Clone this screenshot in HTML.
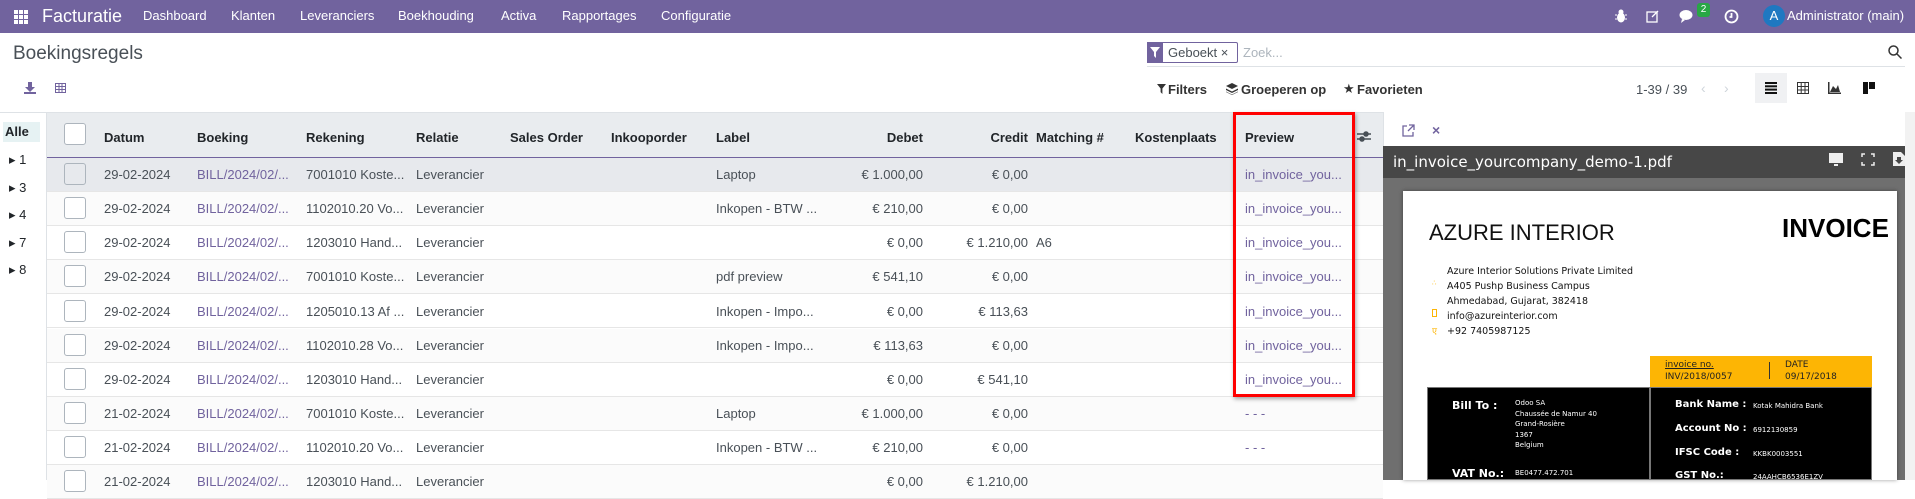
<!DOCTYPE html>
<html><head><meta charset="utf-8"><style>
*{box-sizing:border-box;margin:0;padding:0}
body{width:1915px;height:480px;overflow:hidden;background:#fff;font-family:"Liberation Sans",sans-serif;font-size:13px;color:#495057;position:relative}
.a{position:absolute;white-space:nowrap}
.nav{position:absolute;left:0;top:0;width:1915px;height:33px;background:#71639e;color:#fff}
.nav .a{top:8px;font-size:13px;color:#fff}
.hdr{position:absolute;left:47px;top:113px;width:1336px;height:45px;background:#e9ecef;border-bottom:1px solid #71639e}
.th{position:absolute;top:130px;font-weight:bold;color:#212529;font-size:13px}
.row{position:absolute;left:47px;width:1336px;height:34px;border-bottom:1px solid #e6e6e6;background:#fff}
.cb{position:absolute;left:64px;width:22px;height:22px;border:1px solid #adb5bd;border-radius:3px;background:#fff}
.c{position:absolute;font-size:13px;color:#495057}
.lk{color:#71639e}
.r{text-align:right}
.pdf{position:absolute;font-family:"DejaVu Sans",sans-serif;white-space:nowrap}
</style></head><body>
<div class="nav">
 <svg class="a" style="left:14px;top:10px" width="14" height="14" viewBox="0 0 14 14" fill="#fff"><rect x="0" y="0" width="4" height="4"/><rect x="5" y="0" width="4" height="4"/><rect x="10" y="0" width="4" height="4"/><rect x="0" y="5" width="4" height="4"/><rect x="5" y="5" width="4" height="4"/><rect x="10" y="5" width="4" height="4"/><rect x="0" y="10" width="4" height="4"/><rect x="5" y="10" width="4" height="4"/><rect x="10" y="10" width="4" height="4"/></svg>
 <div class="a" style="left:42px;top:6px;font-size:18px">Facturatie</div>
 <div class="a" style="left:143px">Dashboard</div>
 <div class="a" style="left:231px">Klanten</div>
 <div class="a" style="left:300px">Leveranciers</div>
 <div class="a" style="left:398px">Boekhouding</div>
 <div class="a" style="left:501px">Activa</div>
 <div class="a" style="left:562px">Rapportages</div>
 <div class="a" style="left:661px">Configuratie</div>
 <svg class="a" style="left:1615px;top:9px" width="12" height="14" viewBox="0 0 12 14" fill="#fff"><ellipse cx="6" cy="8.5" rx="4" ry="5"/><circle cx="6" cy="3" r="2.5"/><path d="M0 6h2M10 6h2M0 10h2M10 10h2" stroke="#fff"/></svg>
 <svg class="a" style="left:1646px;top:9px" width="14" height="14" viewBox="0 0 14 14" fill="none" stroke="#fff" stroke-width="1.3"><rect x="1" y="3" width="10" height="10"/><path d="M6 8l6-6"/></svg>
 <svg class="a" style="left:1679px;top:9px" width="16" height="15" viewBox="0 0 16 15" fill="#fff"><ellipse cx="7" cy="6" rx="6.5" ry="5"/><path d="M3 10l-1 4 4-3z"/></svg>
 <div class="a" style="left:1697px;top:3px;width:13px;height:14px;background:#28a745;border-radius:3px;font-size:10px;text-align:center;line-height:14px">2</div>
 <svg class="a" style="left:1724px;top:9px" width="15" height="15" viewBox="0 0 15 15" fill="none" stroke="#fff" stroke-width="1.8"><circle cx="7.5" cy="7.5" r="6"/><path d="M7.5 4v4h-2"/></svg>
 <div class="a" style="left:1763px;top:5px;width:22px;height:22px;border-radius:50%;background:#1f78c1;text-align:center;line-height:22px;font-size:13px;top:5px">A</div>
 <div class="a" style="left:1787px">Administrator (main)</div>
</div>
<div class="a" style="left:13px;top:43px;font-size:19px;color:#495057">Boekingsregels</div>
<svg class="a" style="left:24px;top:82px" width="12" height="12" viewBox="0 0 12 12" fill="#71639e"><path d="M4 0h4v5h3l-5 5-5-5h3z"/><rect x="0" y="10" width="12" height="2"/></svg>
<svg class="a" style="left:55px;top:83px" width="11" height="10" viewBox="0 0 11 10" fill="none" stroke="#71639e"><rect x=".5" y=".5" width="10" height="9"/><path d="M.5 3.5h10M.5 6.5h10M4 .5v9M7 .5v9"/></svg>
<!-- search -->
<div class="a" style="left:1147px;top:42px;width:91px;height:21px;border:1px solid #71639e;border-radius:2px"></div>
<div class="a" style="left:1147px;top:42px;width:16px;height:21px;background:#71639e"></div>
<svg class="a" style="left:1150px;top:47px" width="10" height="11" viewBox="0 0 10 11" fill="#fff"><path d="M0 0h10L6 5v6L4 9V5z"/></svg>
<div class="a" style="left:1168px;top:45px;color:#495057">Geboekt ×</div>
<div class="a" style="left:1243px;top:45px;color:#adb5bd">Zoek...</div>
<div class="a" style="left:1147px;top:66px;width:758px;height:1px;background:#dee2e6"></div>
<svg class="a" style="left:1888px;top:45px" width="14" height="14" viewBox="0 0 14 14" fill="none" stroke="#333" stroke-width="1.5"><circle cx="5.5" cy="5.5" r="4.5"/><path d="M9 9l4.5 4.5"/></svg>
<!-- toolbar -->
<svg class="a" style="left:1157px;top:84px" width="9" height="10" viewBox="0 0 10 11" fill="#333"><path d="M0 0h10L6 5v6L4 9V5z"/></svg>
<div class="a" style="left:1168px;top:82px;font-weight:bold;color:#333">Filters</div>
<svg class="a" style="left:1226px;top:83px" width="12" height="12" viewBox="0 0 12 12" fill="#333"><path d="M6 0l6 3-6 3-6-3z"/><path d="M0 5.5l6 3 6-3v1.5l-6 3-6-3zM0 8.5l6 3 6-3v.5l-6 3-6-3z"/></svg>
<div class="a" style="left:1241px;top:82px;font-weight:bold;color:#333">Groeperen op</div>
<div class="a" style="left:1343px;top:81px;color:#333;font-size:13px">★</div>
<div class="a" style="left:1357px;top:82px;font-weight:bold;color:#333">Favorieten</div>
<div class="a" style="left:1636px;top:82px;color:#495057">1-39 / 39</div>
<div class="a" style="left:1701px;top:80px;color:#ced4da;font-size:14px">‹</div>
<div class="a" style="left:1724px;top:80px;color:#ced4da;font-size:14px">›</div>
<div class="a" style="left:1755px;top:73px;width:32px;height:30px;background:#f0f1f3"></div>
<svg class="a" style="left:1765px;top:82px" width="12" height="12" viewBox="0 0 12 12" fill="#111"><rect y="0" width="12" height="2"/><rect y="3.3" width="12" height="2"/><rect y="6.6" width="12" height="2"/><rect y="10" width="12" height="2"/></svg>
<svg class="a" style="left:1797px;top:82px" width="12" height="12" viewBox="0 0 12 12" fill="none" stroke="#333"><rect x=".5" y=".5" width="11" height="11"/><path d="M.5 4.5h11M.5 8h11M4.2 .5v11M8 .5v11"/></svg>
<svg class="a" style="left:1828px;top:82px" width="13" height="12" viewBox="0 0 13 12" fill="#333"><path d="M0 0v12h13v-1.5H1.5V0z"/><path d="M2 10l3-6 3 3 2-4 2 7z"/></svg>
<svg class="a" style="left:1863px;top:82px" width="12" height="12" viewBox="0 0 12 12" fill="#111"><rect width="5" height="12"/><rect x="6" width="6" height="7"/></svg>
<!-- sidebar -->
<div class="a" style="left:46px;top:112px;width:1px;height:368px;background:#dee2e6"></div>
<div class="a" style="left:0;top:112px;width:1383px;height:1px;background:#dee2e6"></div>
<div class="a" style="left:3px;top:122px;width:37px;height:20px;background:#e6f2f3"></div>
<div class="a" style="left:5px;top:124px;font-weight:bold;color:#212529">Alle</div>
<div class="a" style="left:9px;top:152px;color:#212529">▸ 1</div>
<div class="a" style="left:9px;top:180px;color:#212529">▸ 3</div>
<div class="a" style="left:9px;top:207px;color:#212529">▸ 4</div>
<div class="a" style="left:9px;top:235px;color:#212529">▸ 7</div>
<div class="a" style="left:9px;top:262px;color:#212529">▸ 8</div>
<!-- table header -->
<div class="hdr"></div>
<div class="cb" style="top:123px"></div>
<div class="th" style="left:104px">Datum</div>
<div class="th" style="left:197px">Boeking</div>
<div class="th" style="left:306px">Rekening</div>
<div class="th" style="left:416px">Relatie</div>
<div class="th" style="left:510px">Sales Order</div>
<div class="th" style="left:611px">Inkooporder</div>
<div class="th" style="left:716px">Label</div>
<div class="th" style="left:863px;width:60px;text-align:right">Debet</div>
<div class="th" style="left:968px;width:60px;text-align:right">Credit</div>
<div class="th" style="left:1036px">Matching #</div>
<div class="th" style="left:1135px">Kostenplaats</div>
<div class="th" style="left:1245px">Preview</div>
<svg class="a" style="left:1357px;top:130px" width="14" height="13" viewBox="0 0 14 13" stroke="#495057" stroke-width="1.5" fill="#495057"><path d="M0 4h14M0 9h14"/><circle cx="9" cy="4" r="2"/><circle cx="5" cy="9" r="2"/></svg>
<!-- rows -->
<div class="row" style="top:158px;background:#e7e9ed"></div>
<div class="row" style="top:192px;background:#fbfbfb"></div>
<div class="row" style="top:226px"></div>
<div class="row" style="top:260px;background:#fbfbfb"></div>
<div class="row" style="top:294px"></div>
<div class="row" style="top:329px;background:#fbfbfb"></div>
<div class="row" style="top:363px"></div>
<div class="row" style="top:397px;background:#fbfbfb"></div>
<div class="row" style="top:431px"></div>
<div class="row" style="top:465px;background:#fbfbfb"></div>

<div class="cb" style="top:163px;background:#e7e9ed"></div><div class="c" style="left:104px;top:167px">29-02-2024</div><div class="c lk" style="left:197px;top:167px">BILL/2024/02/...</div><div class="c" style="left:306px;top:167px">7001010 Koste...</div><div class="c" style="left:416px;top:167px">Leverancier</div><div class="c" style="left:716px;top:167px">Laptop</div><div class="c r" style="left:823px;width:100px;top:167px">€ 1.000,00</div><div class="c r" style="left:928px;width:100px;top:167px">€ 0,00</div><div class="c lk" style="left:1245px;top:167px">in_invoice_you...</div>
<div class="cb" style="top:197px"></div><div class="c" style="left:104px;top:201px">29-02-2024</div><div class="c lk" style="left:197px;top:201px">BILL/2024/02/...</div><div class="c" style="left:306px;top:201px">1102010.20 Vo...</div><div class="c" style="left:416px;top:201px">Leverancier</div><div class="c" style="left:716px;top:201px">Inkopen - BTW ...</div><div class="c r" style="left:823px;width:100px;top:201px">€ 210,00</div><div class="c r" style="left:928px;width:100px;top:201px">€ 0,00</div><div class="c lk" style="left:1245px;top:201px">in_invoice_you...</div>
<div class="cb" style="top:231px"></div><div class="c" style="left:104px;top:235px">29-02-2024</div><div class="c lk" style="left:197px;top:235px">BILL/2024/02/...</div><div class="c" style="left:306px;top:235px">1203010 Hand...</div><div class="c" style="left:416px;top:235px">Leverancier</div><div class="c r" style="left:823px;width:100px;top:235px">€ 0,00</div><div class="c r" style="left:928px;width:100px;top:235px">€ 1.210,00</div><div class="c" style="left:1036px;top:235px">A6</div><div class="c lk" style="left:1245px;top:235px">in_invoice_you...</div>
<div class="cb" style="top:265px"></div><div class="c" style="left:104px;top:269px">29-02-2024</div><div class="c lk" style="left:197px;top:269px">BILL/2024/02/...</div><div class="c" style="left:306px;top:269px">7001010 Koste...</div><div class="c" style="left:416px;top:269px">Leverancier</div><div class="c" style="left:716px;top:269px">pdf preview</div><div class="c r" style="left:823px;width:100px;top:269px">€ 541,10</div><div class="c r" style="left:928px;width:100px;top:269px">€ 0,00</div><div class="c lk" style="left:1245px;top:269px">in_invoice_you...</div>
<div class="cb" style="top:300px"></div><div class="c" style="left:104px;top:304px">29-02-2024</div><div class="c lk" style="left:197px;top:304px">BILL/2024/02/...</div><div class="c" style="left:306px;top:304px">1205010.13 Af ...</div><div class="c" style="left:416px;top:304px">Leverancier</div><div class="c" style="left:716px;top:304px">Inkopen - Impo...</div><div class="c r" style="left:823px;width:100px;top:304px">€ 0,00</div><div class="c r" style="left:928px;width:100px;top:304px">€ 113,63</div><div class="c lk" style="left:1245px;top:304px">in_invoice_you...</div>
<div class="cb" style="top:334px"></div><div class="c" style="left:104px;top:338px">29-02-2024</div><div class="c lk" style="left:197px;top:338px">BILL/2024/02/...</div><div class="c" style="left:306px;top:338px">1102010.28 Vo...</div><div class="c" style="left:416px;top:338px">Leverancier</div><div class="c" style="left:716px;top:338px">Inkopen - Impo...</div><div class="c r" style="left:823px;width:100px;top:338px">€ 113,63</div><div class="c r" style="left:928px;width:100px;top:338px">€ 0,00</div><div class="c lk" style="left:1245px;top:338px">in_invoice_you...</div>
<div class="cb" style="top:368px"></div><div class="c" style="left:104px;top:372px">29-02-2024</div><div class="c lk" style="left:197px;top:372px">BILL/2024/02/...</div><div class="c" style="left:306px;top:372px">1203010 Hand...</div><div class="c" style="left:416px;top:372px">Leverancier</div><div class="c r" style="left:823px;width:100px;top:372px">€ 0,00</div><div class="c r" style="left:928px;width:100px;top:372px">€ 541,10</div><div class="c lk" style="left:1245px;top:372px">in_invoice_you...</div>
<div class="cb" style="top:402px"></div><div class="c" style="left:104px;top:406px">21-02-2024</div><div class="c lk" style="left:197px;top:406px">BILL/2024/02/...</div><div class="c" style="left:306px;top:406px">7001010 Koste...</div><div class="c" style="left:416px;top:406px">Leverancier</div><div class="c" style="left:716px;top:406px">Laptop</div><div class="c r" style="left:823px;width:100px;top:406px">€ 1.000,00</div><div class="c r" style="left:928px;width:100px;top:406px">€ 0,00</div><div class="c lk" style="left:1245px;top:406px">- - -</div>
<div class="cb" style="top:436px"></div><div class="c" style="left:104px;top:440px">21-02-2024</div><div class="c lk" style="left:197px;top:440px">BILL/2024/02/...</div><div class="c" style="left:306px;top:440px">1102010.20 Vo...</div><div class="c" style="left:416px;top:440px">Leverancier</div><div class="c" style="left:716px;top:440px">Inkopen - BTW ...</div><div class="c r" style="left:823px;width:100px;top:440px">€ 210,00</div><div class="c r" style="left:928px;width:100px;top:440px">€ 0,00</div><div class="c lk" style="left:1245px;top:440px">- - -</div>
<div class="cb" style="top:470px"></div><div class="c" style="left:104px;top:474px">21-02-2024</div><div class="c lk" style="left:197px;top:474px">BILL/2024/02/...</div><div class="c" style="left:306px;top:474px">1203010 Hand...</div><div class="c" style="left:416px;top:474px">Leverancier</div><div class="c r" style="left:823px;width:100px;top:474px">€ 0,00</div><div class="c r" style="left:928px;width:100px;top:474px">€ 1.210,00</div>
<!-- red box -->
<div class="a" style="left:1233px;top:112px;width:122px;height:285px;border:3px solid #f00;box-shadow:1px 2px 4px rgba(0,0,0,.35)"></div>
<!-- preview panel -->
<div class="a" style="left:1383px;top:112px;width:532px;height:368px;background:#fff;border-left:1px solid #dee2e6"></div>
<svg class="a" style="left:1402px;top:124px" width="13" height="13" viewBox="0 0 13 13" fill="none" stroke="#71639e" stroke-width="1.3"><path d="M5 2H1v10h10V8M7 1h5v5M12 1L6 7"/></svg>
<div class="a" style="left:1432px;top:122px;color:#71639e;font-weight:bold;font-size:14px">×</div>
<div class="a" style="left:1383px;top:146px;width:522px;height:334px;background:#6f6f6f"></div>
<div class="a" style="left:1383px;top:146px;width:522px;height:32px;background:#474747"></div>
<div class="a" style="left:1393px;top:153px;color:#fff;font-size:15px;font-family:'DejaVu Sans',sans-serif">in_invoice_yourcompany_demo-1.pdf</div>
<svg class="a" style="left:1829px;top:153px" width="14" height="13" viewBox="0 0 14 13" fill="#eee"><rect width="14" height="10"/><rect x="5" y="11" width="4" height="2"/></svg>
<svg class="a" style="left:1861px;top:153px" width="14" height="13" viewBox="0 0 14 13" fill="none" stroke="#eee" stroke-width="1.5"><path d="M1 4V1h3M10 1h3v3M13 9v3h-3M4 12H1V9"/></svg>
<svg class="a" style="left:1893px;top:152px" width="12" height="14" viewBox="0 0 12 14" fill="#eee"><path d="M0 0h8l4 4v10H0z"/><path d="M4 5h4v3h2l-4 4-4-4h2z" fill="#474747"/></svg>
<div class="a" style="left:1905px;top:112px;width:10px;height:368px;background:#f2f2f2"></div>
<div class="a" style="left:1403px;top:191px;width:494px;height:289px;background:#fff;box-shadow:0 0 4px rgba(0,0,0,.4)"></div>
<div class="pdf" style="left:1429px;top:220px;font-size:22px;color:#111;font-family:'Liberation Sans',sans-serif">AZURE INTERIOR</div>
<div class="pdf" style="left:1782px;top:213px;font-size:26px;font-weight:bold;color:#000;font-family:'Liberation Sans',sans-serif">INVOICE</div>
<div class="pdf" style="left:1447px;top:264px;font-size:9.5px;color:#111;line-height:15px">Azure Interior Solutions Private Limited<br>A405 Pushp Business Campus<br>Ahmedabad, Gujarat, 382418<br>info@azureinterior.com<br>+92 7405987125</div>
<div class="pdf" style="left:1432px;top:279px;font-size:7px;color:#fdb504">∴</div>
<div class="pdf" style="left:1432px;top:309px;width:5px;height:8px;border:1px solid #fdb504"></div>
<div class="pdf" style="left:1432px;top:324px;font-size:9px;color:#fdb504">ए</div>
<div class="a" style="left:1650px;top:356px;width:222px;height:31px;background:#fdb504"></div>
<div class="pdf" style="left:1665px;top:359px;font-size:9px;color:#222;line-height:12px"><u>invoice no.</u><br>INV/2018/0057</div>
<div class="a" style="left:1769px;top:362px;width:1px;height:17px;background:#333"></div>
<div class="pdf" style="left:1785px;top:359px;font-size:9px;color:#222;line-height:12px">DATE<br>09/17/2018</div>
<div class="a" style="left:1427px;top:387px;width:445px;height:93px;background:#000;border:1px solid #777"></div>
<div class="a" style="left:1649px;top:387px;width:2px;height:93px;background:#777"></div>
<div class="pdf" style="left:1452px;top:399px;font-size:11px;font-weight:bold;color:#fff">Bill To :</div>
<div class="pdf" style="left:1515px;top:398px;font-size:7px;color:#fff;line-height:10.5px">Odoo SA<br>Chaussée de Namur 40<br>Grand-Rosière<br>1367<br>Belgium</div>
<div class="pdf" style="left:1452px;top:467px;font-size:11px;font-weight:bold;color:#fff">VAT No.:</div>
<div class="pdf" style="left:1515px;top:469px;font-size:7px;color:#fff">BE0477.472.701</div>
<div class="pdf" style="left:1675px;top:399px;font-size:10px;font-weight:bold;color:#fff">Bank Name :</div>
<div class="pdf" style="left:1753px;top:402px;font-size:7px;color:#fff">Kotak Mahidra Bank</div>
<div class="pdf" style="left:1675px;top:423px;font-size:10px;font-weight:bold;color:#fff">Account No :</div>
<div class="pdf" style="left:1753px;top:426px;font-size:7px;color:#fff">6912130859</div>
<div class="pdf" style="left:1675px;top:447px;font-size:10px;font-weight:bold;color:#fff">IFSC Code :</div>
<div class="pdf" style="left:1753px;top:450px;font-size:7px;color:#fff">KKBK0003551</div>
<div class="pdf" style="left:1675px;top:470px;font-size:10px;font-weight:bold;color:#fff">GST No.:</div>
<div class="pdf" style="left:1753px;top:473px;font-size:7px;color:#fff">24AAHCB6536E1ZV</div>
</body></html>
